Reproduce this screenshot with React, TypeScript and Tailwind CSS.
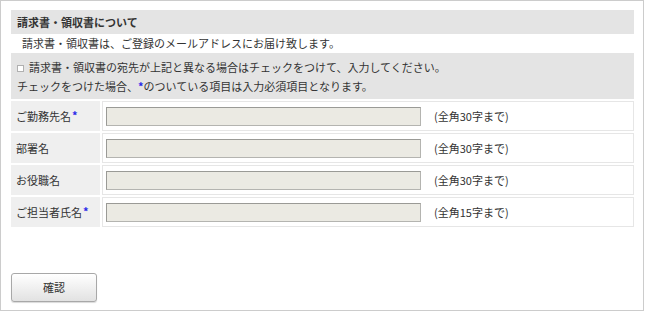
import React from "react";

const font = { fontFamily: '"Noto Sans CJK JP", "Noto Sans", sans-serif' };

function Row({ label, req, note }: { label: string; req?: boolean; note: string }) {
  return (
    <div className="flex gap-[2px] h-[30px]">
      <div className="w-[89px] bg-[#efefef] flex items-center pl-[5px] text-[#333]">
        <span>{label}</span>
        {req && <span className="text-[#2a2ae8] text-[11px] font-bold leading-[11px] self-start mt-[9px] ml-[1px]">*</span>}
      </div>
      <div className="flex-1 border border-[#e6e6e6] bg-white flex items-center pl-[3px]">
        <div className="w-[315px] h-[19px] bg-[#ebeae3] border border-[#b4b4b0] border-t-[#9a9a96] border-l-[#9a9a96]" />
        <span className="ml-[13px] text-[#333]">{note}</span>
      </div>
    </div>
  );
}

export default function App() {
  return (
    <div
      className="w-[644px] h-[311px] border border-[#cccccc] bg-white text-[11px] leading-[19px] text-[#333]"
      style={font}
    >
      <div className="ml-[10px] mt-[9px] w-[623px]">
        <div className="h-[24px] bg-[#e4e4e4] flex items-center pl-[6px] font-bold">
          請求書・領収書について
        </div>
        <div className="h-[19px] pl-[11px] flex items-center">
          請求書・領収書は、ご登録のメールアドレスにお届け致します。
        </div>
        <div className="h-[46px] bg-[#e4e4e4] pl-[6px] pt-[5px]">
          <div className="flex items-center h-[19px]">
            <span className="inline-block w-[7px] h-[7px] border border-[#b0b0b0] bg-white mr-[5px] mt-[2px]" />
            <span>請求書・領収書の宛先が上記と異なる場合はチェックをつけて、入力してください。</span>
          </div>
          <div className="h-[19px]">
            チェックをつけた場合、<span className="text-[#2a2ae8] font-bold">*</span>のついている項目は入力必須項目となります。
          </div>
        </div>
        <div className="flex flex-col gap-[2px] mt-[2px]">
          <Row label="ご勤務先名" req note="(全角30字まで)" />
          <Row label="部署名" note="(全角30字まで)" />
          <Row label="お役職名" note="(全角30字まで)" />
          <Row label="ご担当者氏名" req note="(全角15字まで)" />
        </div>
        <button
          className="mt-[46px] w-[86px] h-[29px] rounded-[3px] border border-[#a8a8a8] bg-gradient-to-b from-[#ffffff] to-[#e2e2e2] shadow-[0_1px_1px_rgba(0,0,0,0.15)] text-[#333] text-[11px]"
          style={font}
        >
          確認
        </button>
      </div>
    </div>
  );
}
